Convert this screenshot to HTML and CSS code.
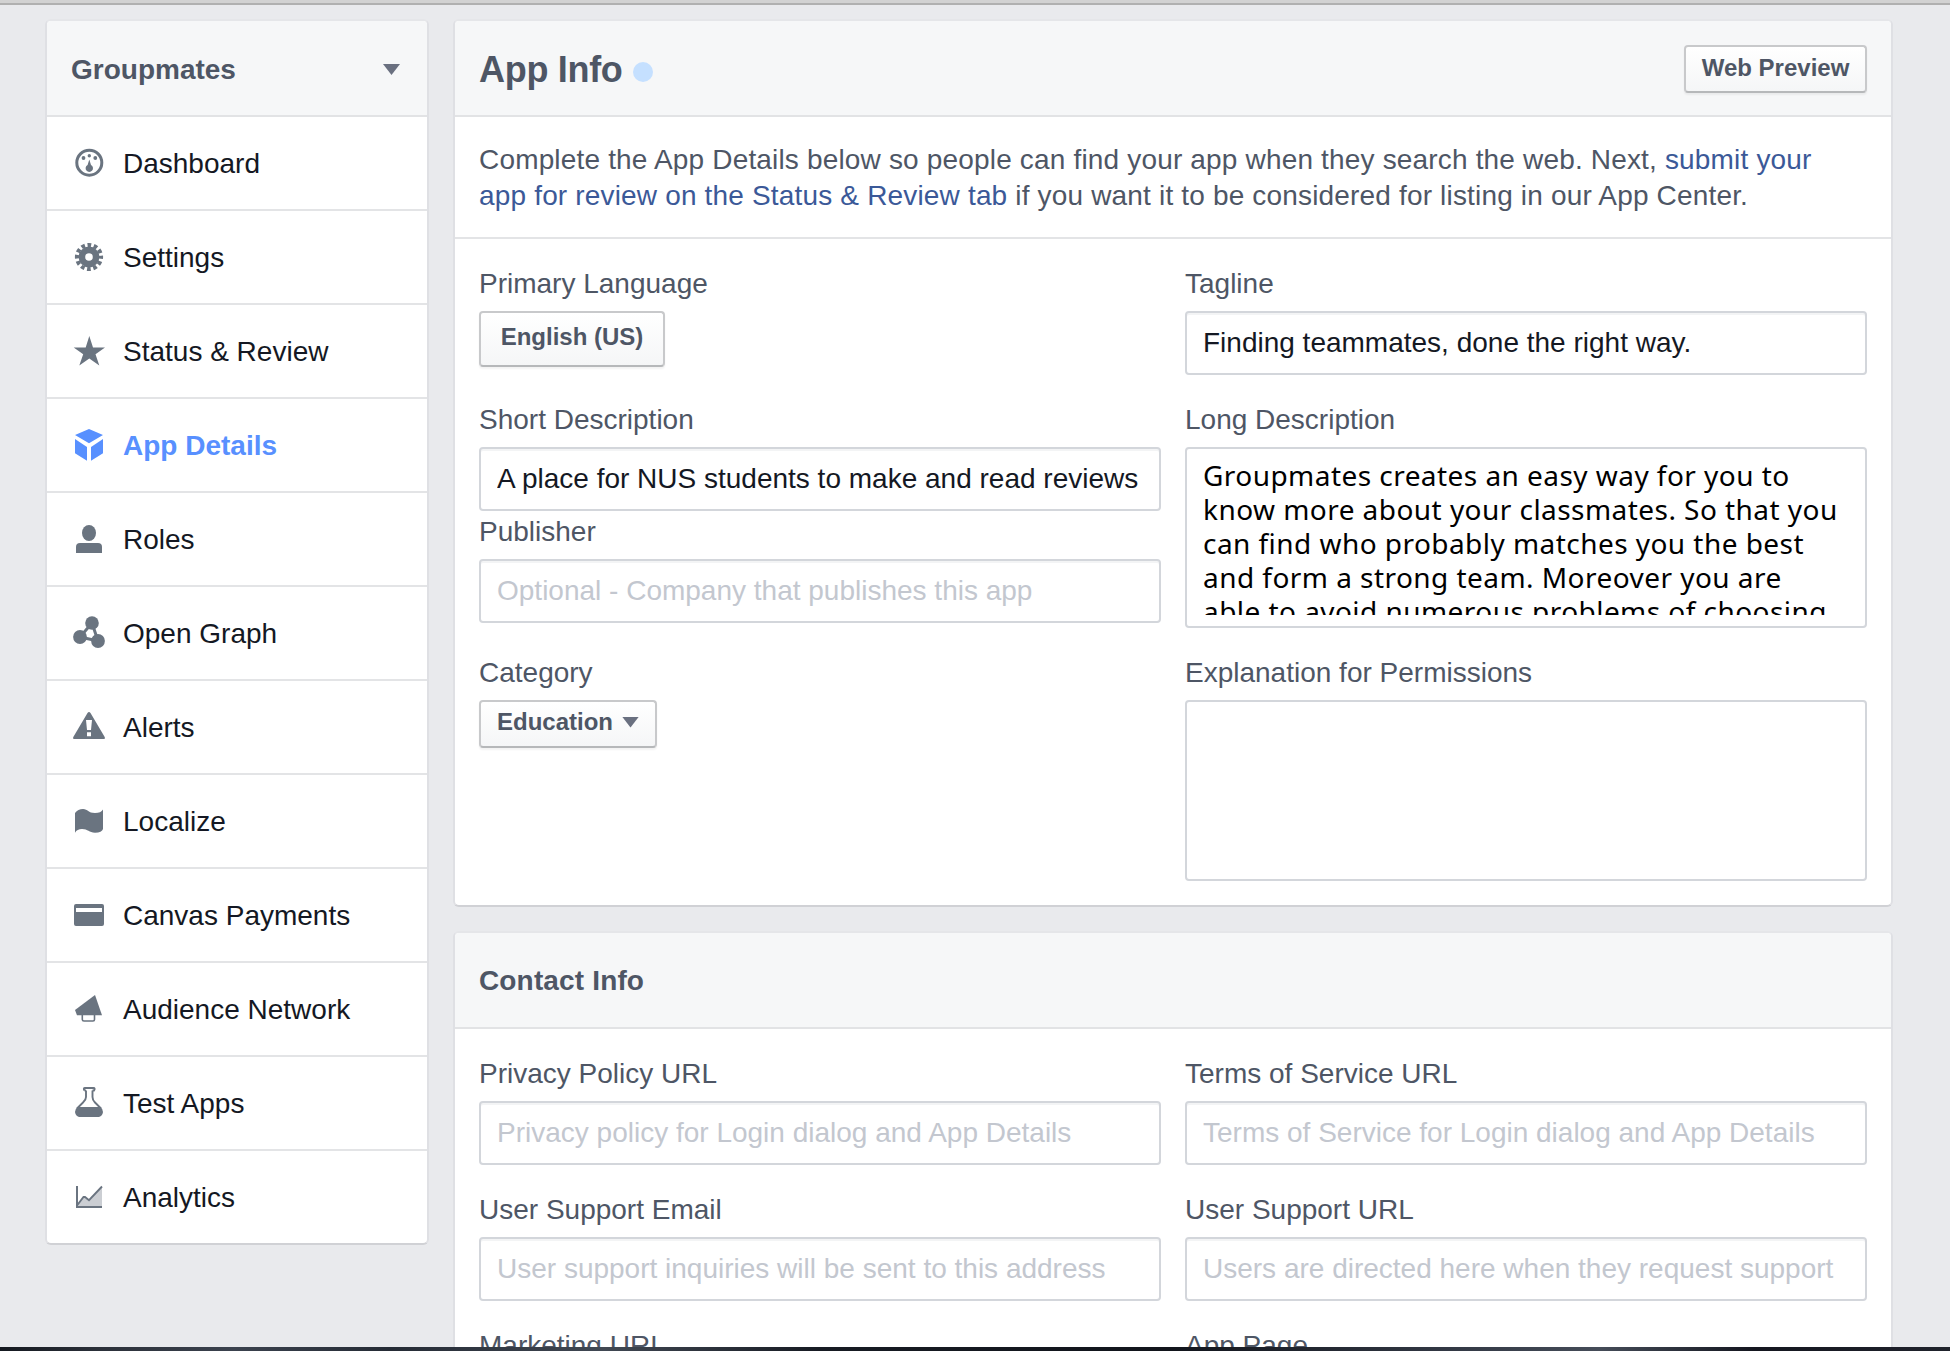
FILE: index.html
```html
<!DOCTYPE html>
<html lang="en">
<head>
<meta charset="utf-8">
<title>App Details - Groupmates</title>
<link rel="stylesheet" href="styles.css">
</head>
<body>
<div class="toolbar-edge"></div>
<div class="page">
  <nav class="card sidebar">
    <div class="card-header app-switcher"><span>Groupmates</span><span class="caret"></span></div>
    <a class="item"><svg class="icon" viewBox="0 0 32 32"><circle cx="16.300" cy="15.700" r="12.500" fill="none" stroke="currentColor" stroke-width="3"/><circle cx="10.500" cy="11" r="1.900"/><circle cx="16.300" cy="8.700" r="1.700"/><circle cx="22.300" cy="11" r="1.900"/><path d="M16.300 12.500L18 18A3.700 3.700 0 1 1 14.600 18Z"/></svg>Dashboard</a>
    <a class="item"><svg class="icon" viewBox="0 0 32 32"><circle cx="16" cy="16" r="7.100" fill="none" stroke="currentColor" stroke-width="6.600"/><circle cx="16" cy="16" r="12" fill="none" stroke="currentColor" stroke-width="4.200" stroke-dasharray="3.700 2.583" stroke-dashoffset="1.850"/></svg>Settings</a>
    <a class="item"><svg class="icon" viewBox="0 0 32 32"><path d="M16.300 1L20 12.500H32L22.500 19.300L26.300 30.500L16.300 23.500L6.300 30.500L10.200 19.300L.7 12.500H12.700Z"/></svg>Status &amp; Review</a>
    <a class="item active"><svg class="icon" viewBox="0 0 32 32"><path d="M16 0L30 6L16 14.300L2 6ZM2 10L14 18V31.700L2 24.300ZM30 10L18 18V31.700L30 24.300Z"/></svg>App Details</a>
    <a class="item"><svg class="icon" viewBox="0 0 32 32"><ellipse cx="16" cy="10" rx="7" ry="8"/><path d="M3 30V24Q3 20 7 20H25Q29 20 29 24V30Z"/></svg>Roles</a>
    <a class="item"><svg class="icon" viewBox="0 0 32 32"><path d="M19 6L7 20L25 24Z" fill="none" stroke="currentColor" stroke-width="3"/><circle cx="19" cy="6" r="6.800"/><circle cx="7" cy="20" r="6.900"/><circle cx="25" cy="24" r="6.900"/></svg>Open Graph</a>
    <a class="item"><svg class="icon" viewBox="0 0 32 32"><path fill-rule="evenodd" d="M14.500 2Q16 0 17.500 2L31.700 26Q32.500 28 30.500 28H1.500Q-.5 28 .3 26ZM13 9L14 19H18L19 9ZM14 21.300V25.300H18V21.300Z"/></svg>Alerts</a>
    <a class="item"><svg class="icon" viewBox="0 0 32 32"><path d="M2 8Q5 4 10 4C15 4 15 8 22 8Q28 8 30 4.500V24Q29 27.700 22 27.700C16 27.700 15 24 9 24Q4 24 2 27.700Z"/></svg>Localize</a>
    <a class="item"><svg class="icon" viewBox="0 0 32 32"><path fill-rule="evenodd" d="M3 5H29Q31 5 31 7V25Q31 27 29 27H3Q1 27 1 25V7Q1 5 3 5ZM3 9V13H29V9Z"/></svg>Canvas Payments</a>
    <a class="item"><svg class="icon" viewBox="0 0 32 32"><path d="M2 17L22 2L29 22.300H4Z"/><path d="M9.300 22V26.500Q9.300 28 11 28H20Q21.500 28 21.500 26.500V22" fill="none" stroke="currentColor" stroke-width="1.600"/></svg>Audience Network</a>
    <a class="item"><svg class="icon" viewBox="0 0 32 32"><path d="M13 3.500V10Q13 13 10 15.500L4 21.500M19.500 3.500V10Q19.500 13 22 15.500L28 21.500M11.500 3.500Q10 1 12 1H20.500Q22.500 1 21 3.500H19.500M11.500 3.500H13" fill="none" stroke="currentColor" stroke-width="1.900"/><path d="M4.500 20H27.500Q30 22 30 25Q29.500 29 26 30H6Q2.500 29 2 25Q2 22 4.500 20Z"/></svg>Test Apps</a>
    <a class="item"><svg class="icon" viewBox="0 0 32 32"><path d="M4 25L11 16.200L16 19.500L29 6V26H4Z" opacity=".35"/><path d="M4 5V26H29" fill="none" stroke="currentColor" stroke-width="2"/><path d="M4 24.500L10.500 16L12 16L16 19.200L29 5.500" fill="none" stroke="currentColor" stroke-width="1.900"/></svg>Analytics</a>
  </nav>

  <main class="main">
    <section class="card">
      <header class="card-header">
        <h1 class="title">App Info</h1><span class="dot"></span>
        <button class="btn header-btn">Web Preview</button>
      </header>
      <p class="intro">Complete the App Details below so people can find your app when they search the web. Next, <a class="link">submit your<br>app for review on the Status &amp; Review tab</a> if you want it to be considered for listing in our App Center.</p>
      <div class="form">
        <div class="cell"><label class="label">Primary Language</label><button class="btn language">English (US)</button></div>
        <div class="cell"><label class="label">Tagline</label><input class="input" value="Finding teammates, done the right way."></div>
        <div class="cell">
          <label class="label">Short Description</label><input class="input" value="A place for NUS students to make and read reviews">
          <label class="label">Publisher</label><input class="input" placeholder="Optional - Company that publishes this app">
        </div>
        <div class="cell"><label class="label">Long Description</label>
          <div class="area"><div class="area-text">Groupmates creates an easy way for you to<br>know more about your classmates. So that you<br>can find who probably matches you the best<br>and form a strong team. Moreover you are<br>able to avoid numerous problems of choosing</div></div>
        </div>
        <div class="cell"><label class="label">Category</label><button class="btn category">Education<span class="caret"></span></button></div>
        <div class="cell"><label class="label">Explanation for Permissions</label><div class="area"></div></div>
      </div>
    </section>

    <section class="card">
      <header class="card-header contact-header"><h2 class="subtitle">Contact Info</h2></header>
      <div class="form">
        <div class="cell"><label class="label">Privacy Policy URL</label><input class="input" placeholder="Privacy policy for Login dialog and App Details"></div>
        <div class="cell"><label class="label">Terms of Service URL</label><input class="input" placeholder="Terms of Service for Login dialog and App Details"></div>
        <div class="cell"><label class="label">User Support Email</label><input class="input" placeholder="User support inquiries will be sent to this address"></div>
        <div class="cell"><label class="label">User Support URL</label><input class="input" placeholder="Users are directed here when they request support"></div>
        <div class="cell"><label class="label">Marketing URL</label></div>
        <div class="cell"><label class="label">App Page</label></div>
      </div>
    </section>
  </main>
</div>
<div class="desktop-edge"></div>
</body>
</html>
```
FILE: styles.css
```css
* { box-sizing: border-box; }

body {
  margin: 0;
  height: 1351px;
  overflow: hidden;
  display: flex;
  flex-direction: column;
  background: #e9eaed;
  color: #4e5665;
  font: 28px/36px "Liberation Sans", Arial, sans-serif;
  letter-spacing: 0;
}

.toolbar-edge {
  flex: none;
  height: 5px;
  background: #d2d2d2;
  border-bottom: 2px solid #b0b0b0;
}

.desktop-edge {
  flex: none;
  height: 4px;
  background: linear-gradient(90deg, #14181f, #2b3039 5%, #3b424e 12%, #252b35 20%, #414853 31%, #171b23 42%, #11141b 60%, #343a46 75%, #454c58 82%, #14161f 90%, #20232c);
}

.page {
  flex: 1;
  min-height: 0;
  overflow: hidden;
  display: flex;
  align-items: flex-start;
  gap: 24px;
  padding: 14px 0 0 45px;
}

.card {
  background: #fff;
  border: 2px solid #dfe0e4;
  border-top-color: #e5e6e9;
  border-bottom-color: #d0d1d5;
  border-radius: 6px;
}

.card-header {
  height: 96px;
  display: flex;
  align-items: center;
  padding: 3px 24px 0;
  background: #f6f7f8;
  border-bottom: 2px solid #e2e3e5;
  border-radius: 4px 4px 0 0;
}

.contact-header { padding-top: 2px; }

.sidebar { width: 384px; }

.app-switcher {
  justify-content: space-between;
  padding-right: 27px;
  font-weight: bold;
}

.caret {
  width: 17px;
  height: 11px;
  background: #6a7080;
  clip-path: polygon(0 0, 100% 0, 50% 100%);
}

.item {
  height: 94px;
  display: flex;
  align-items: center;
  padding: 2px 26px 0;
  gap: 18px;
  color: #141823;
  border-bottom: 2px solid #e3e4e6;
}

.item:last-child {
  height: 92px;
  border-bottom: 0;
}

.item.active {
  color: #5890ff;
  font-weight: bold;
}

.icon {
  width: 32px;
  height: 32px;
  margin-top: -2px;
  color: #6a7480;
  fill: currentColor;
  overflow: visible;
}

.active .icon { color: #5890ff; }

.main {
  width: 1440px;
  display: flex;
  flex-direction: column;
  gap: 24px;
}

.title,
.subtitle {
  margin: 0;
  font-size: 36px;
  letter-spacing: -0.3px;
}

.subtitle {
  font-size: 28px;
  letter-spacing: 0.15px;
}

.dot {
  width: 20px;
  height: 20px;
  margin: 5px 0 0 10px;
  border-radius: 50%;
  background: #c5e0ff;
}

.intro {
  margin: 0;
  height: 122px;
  padding: 25px 24px 0;
  letter-spacing: 0.17px;
  white-space: nowrap;
  border-bottom: 2px solid #e3e4e6;
}

.link { color: #3b5998; }

.form {
  display: grid;
  grid-template-columns: 1fr 1fr;
  gap: 24px;
  padding: 24px;
}

.cell {
  display: flex;
  flex-direction: column;
  align-items: flex-start;
}

.label {
  height: 48px;
  line-height: 42px;
}

.input,
.area {
  width: 100%;
  background: #fff;
  border: 2px solid #d3d6db;
  border-radius: 4px;
}

.input {
  height: 64px;
  padding: 0 16px;
  color: #141823;
  font: inherit;
  letter-spacing: inherit;
  box-shadow: inset 0 2px 0 #f3f4f5;
}

.input::placeholder { color: #c3c7cf; }

.area {
  height: 181px;
  padding: 9px 16px 12px;
}

.area-text {
  height: 157px;
  overflow: hidden;
  color: #000;
  font: 28px/34px "Noto Sans", sans-serif;
  letter-spacing: 0.45px;
  white-space: nowrap;
}

.btn {
  height: 48px;
  display: flex;
  align-items: center;
  justify-content: center;
  gap: 9px;
  padding: 0 0 4px;
  color: #4e5665;
  font: bold 24px/28px "Liberation Sans", Arial, sans-serif;
  letter-spacing: 0;
  background: linear-gradient(#fff, #f5f6f7);
  border: 2px solid #c8c9cb;
  border-bottom-color: #b6b8ba;
  border-radius: 4px;
  box-shadow: 0 2px 2px rgba(0, 0, 0, .05);
}

.header-btn {
  width: 183px;
  margin: -1px 0 0 auto;
  padding-bottom: 3px;
}

.language {
  width: 186px;
  height: 56px;
}

.category { width: 178px; }
```
